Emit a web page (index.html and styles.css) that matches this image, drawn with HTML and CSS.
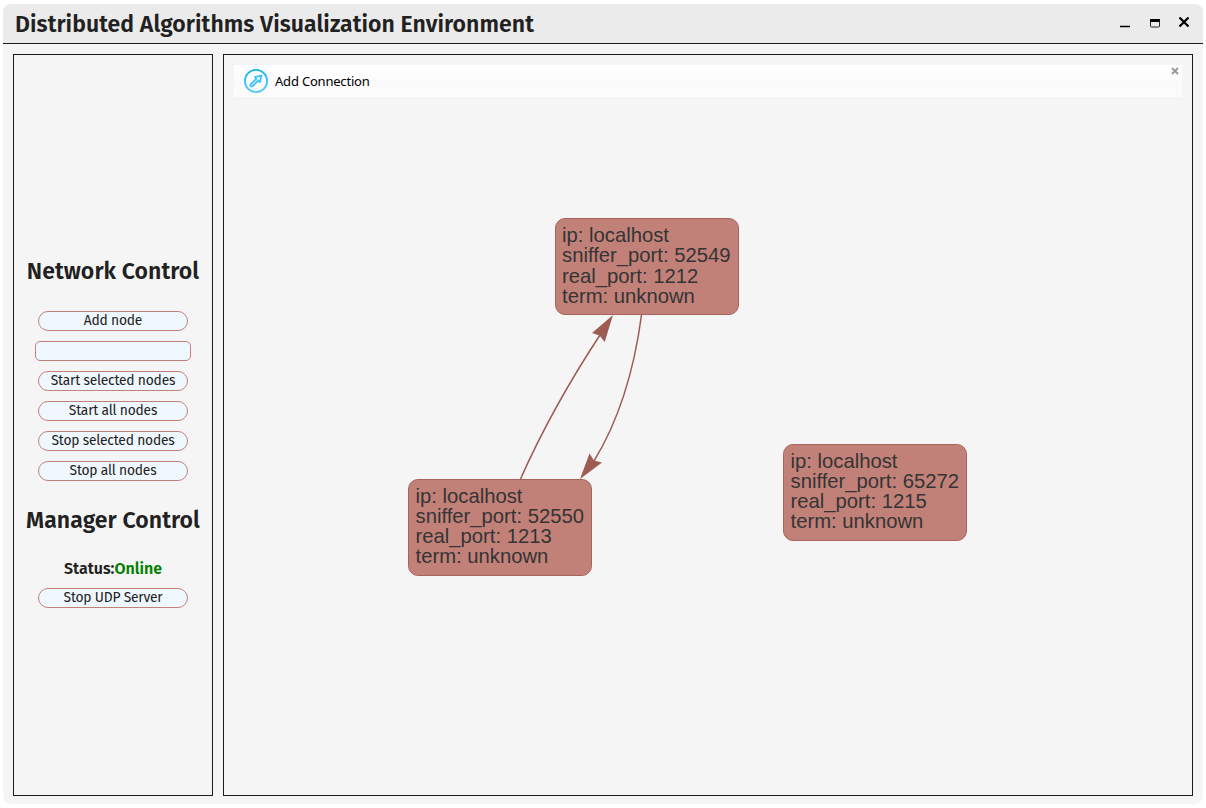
FILE: index.html
```html
<!DOCTYPE html>
<html lang="en">
<head>
<meta charset="utf-8">
<title>Distributed Algorithms Visualization Environment</title>
<link rel="stylesheet" href="styles.css">
</head>
<body>
<div class="window">
  <header class="titlebar">
    <h1 class="title">Distributed Algorithms Visualization Environment</h1>
    <svg class="controls" width="72" height="16" viewBox="0 0 72 16" aria-hidden="true">
      <path d="M0 11.5h10" stroke="#000" stroke-width="1.6"/>
      <rect x="30.5" y="4.5" width="9" height="7.500" rx="1" fill="none" stroke="#222"/>
      <path d="M30 4h10v3H30z"/>
      <path d="M59.500 2.500l9 9M68.500 2.500l-9 9" stroke="#000" stroke-width="2.2"/>
    </svg>
  </header>
  <main class="content">
    <aside class="sidebar">
      <h2 class="heading">Network Control</h2>
      <div class="group">
        <button class="btn">Add node</button>
        <input class="field" type="text" aria-label="Node">
        <button class="btn">Start selected nodes</button>
        <button class="btn">Start all nodes</button>
        <button class="btn">Stop selected nodes</button>
        <button class="btn">Stop all nodes</button>
      </div>
      <h2 class="heading manager">Manager Control</h2>
      <p class="status">Status:<span class="online">Online</span></p>
      <button class="btn">Stop UDP Server</button>
    </aside>
    <section class="network">
      <div class="toolbar">
        <svg class="connect" width="24" height="24" viewBox="0 0 24 24" aria-hidden="true">
          <defs><linearGradient id="ring" x1="0" y1="0" x2="0" y2="1"><stop offset="0" stop-color="#16b6f5"/><stop offset="1" stop-color="#5accfa"/></linearGradient></defs>
          <circle cx="12" cy="12" r="11.100" fill="none" stroke="url(#ring)" stroke-width="1.8"/>
          <path d="M17.500 6.500L10.800 8L12.300 9.800L6.900 15.200Q6 16.300 6.800 17.200Q7.800 18 8.800 17.100L14.200 11.700L16 13.200Z" fill="#d3f1fd" stroke="#3bc2f8" stroke-width="1.7" stroke-linejoin="round"/>
        </svg>
        <span class="connect-label">Add Connection</span>
        <svg class="close" width="8" height="8" viewBox="0 0 8 8" aria-hidden="true"><path d="M1 1l6 6M7 1l-6 6" stroke="#999" stroke-width="1.9"/></svg>
      </div>
      <svg class="edges" width="968" height="740" viewBox="224 55 968 740" aria-hidden="true">
        <g fill="none" stroke="#9d5b52" stroke-width="1.5">
          <path d="M520.500 479Q552 408 600 335"/>
          <path d="M641.500 315Q630 402 594 461"/>
        </g>
        <g fill="#9d5b52">
          <path d="M613 315L592 333L599.500 335.500L604.700 342Z"/>
          <path d="M580 479L589.500 453.500L594 460.500L602 462.500Z"/>
        </g>
      </svg>
      <div class="node node-a">ip: localhost<br>sniffer_port: 52549<br>real_port: 1212<br>term: unknown</div>
      <div class="node node-b">ip: localhost<br>sniffer_port: 52550<br>real_port: 1213<br>term: unknown</div>
      <div class="node node-c">ip: localhost<br>sniffer_port: 65272<br>real_port: 1215<br>term: unknown</div>
    </section>
  </main>
</div>
</body>
</html>
```
FILE: styles.css
```css
* { box-sizing: border-box; }
body { margin: 0; background: #fff; color: #212121; font-family: "Fira Sans", "Noto Sans", sans-serif; overflow: hidden; }
.window { width: 1200px; height: 800px; margin: 4px 3px; display: flex; flex-direction: column; background: #f5f5f5; border-radius: 8px; overflow: hidden; }
.titlebar { flex: none; height: 40px; display: flex; align-items: center; justify-content: space-between; padding: 0 11px 0 12px; background: #ebebeb; border-bottom: 1px solid #1c1c1c; }
.title { margin: 0; font-size: 23px; line-height: 38px; font-weight: 600; letter-spacing: 0.06px; white-space: nowrap; }
.controls { margin-bottom: 1px; }
.content { flex: 1; display: flex; gap: 10px; padding: 10px 10px 8px; }
.sidebar, .network { border: 1px solid #1c1c1c; }
.sidebar { width: 200px; flex: none; display: flex; flex-direction: column; align-items: center; padding-top: 200px; }
.heading { margin: 0; font-size: 23px; line-height: 32px; font-weight: 600; letter-spacing: 0.08px; white-space: nowrap; }
.group { display: flex; flex-direction: column; align-items: center; gap: 10px; margin-top: 24px; }
.btn { width: 150px; height: 20px; padding: 0; border: 1px solid #c28178; border-radius: 10px; background: #f0f8ff; color: #212121; font: 13.8px/17px "Fira Sans", "Noto Sans", sans-serif; letter-spacing: -0.2px; white-space: nowrap; display: flex; justify-content: center; }
.field { width: 156px; height: 20px; margin: 0; padding: 1px 5px; border: 1px solid #c28178; border-radius: 5px; background: #f0f8ff; }
.manager { margin-top: 23px; }
.status { margin: 22px 0 8px; font-size: 16px; line-height: 22px; font-weight: 600; }
.online { color: #008000; }
.network { flex: 1; position: relative; padding: 10px; }
.toolbar { height: 32px; display: flex; align-items: center; padding-left: 10px; padding-right: 3px; background: linear-gradient(#fff, #fcfcfc 48%, #fafafa 50%, #fcfcfc); }
.connect-label { margin-left: 7px; font: 13px/20px "Noto Sans", sans-serif; color: #000; letter-spacing: -0.2px; }
.close { margin-left: auto; margin-bottom: 20px; }
.edges { position: absolute; left: 0; top: 0; }
.node { position: absolute; width: 184px; height: 97px; padding: 6px 0 0 6.5px; border: 1px solid #a9655d; border-radius: 10px; background: #c28178; color: #343434; font: 20.25px/20.15px "Liberation Sans", Arial, sans-serif; white-space: nowrap; }
.node-a { left: 331px; top: 163px; padding-left: 6px; line-height: 20.4px; }
.node-b { left: 184px; top: 424px; }
.node-c { left: 559px; top: 389px; }
```
